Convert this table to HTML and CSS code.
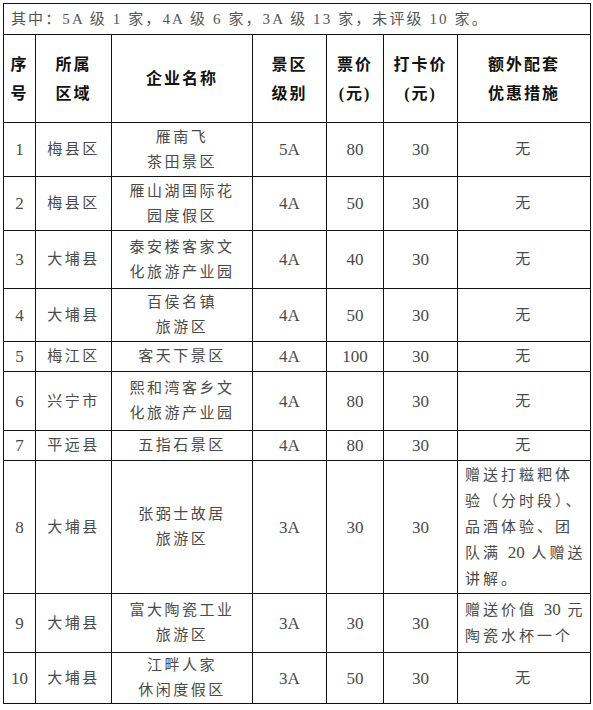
FILE: index.html
```html
<!DOCTYPE html>
<html lang="zh">
<head>
<meta charset="utf-8">
<link rel="stylesheet" href="styles.css">
</head>
<body>
<div class="page">
<table class="tbl">
<colgroup>
<col class="c1"><col class="c2"><col class="c3"><col class="c4"><col class="c5"><col class="c6"><col class="c7">
</colgroup>
<tr class="r-cap"><td colspan="7" class="cap">其中：5A 级 1 家，4A 级 6 家，3A 级 13 家，未评级 10 家。</td></tr>
<tr class="r-head">
<th>序<br>号</th>
<th>所属<br>区域</th>
<th>企业名称</th>
<th>景区<br>级别</th>
<th>票价<br>(元)</th>
<th>打卡价<br>(元)</th>
<th>额外配套<br>优惠措施</th>
</tr>
<tr class="h54"><td class="num">1</td><td>梅县区</td><td>雁南飞<br>茶田景区</td><td class="num">5A</td><td class="num">80</td><td class="num">30</td><td>无</td></tr>
<tr class="h54"><td class="num">2</td><td>梅县区</td><td>雁山湖国际花<br>园度假区</td><td class="num">4A</td><td class="num">50</td><td class="num">30</td><td>无</td></tr>
<tr class="h58"><td class="num">3</td><td>大埔县</td><td>泰安楼客家文<br>化旅游产业园</td><td class="num">4A</td><td class="num">40</td><td class="num">30</td><td>无</td></tr>
<tr class="h53"><td class="num">4</td><td>大埔县</td><td>百侯名镇<br>旅游区</td><td class="num">4A</td><td class="num">50</td><td class="num">30</td><td>无</td></tr>
<tr class="h30"><td class="num">5</td><td>梅江区</td><td>客天下景区</td><td class="num">4A</td><td class="num">100</td><td class="num">30</td><td>无</td></tr>
<tr class="h59"><td class="num">6</td><td>兴宁市</td><td>熙和湾客乡文<br>化旅游产业园</td><td class="num">4A</td><td class="num">80</td><td class="num">30</td><td>无</td></tr>
<tr class="h30"><td class="num">7</td><td>平远县</td><td>五指石景区</td><td class="num">4A</td><td class="num">80</td><td class="num">30</td><td>无</td></tr>
<tr class="h133"><td class="num">8</td><td>大埔县</td><td>张弼士故居<br>旅游区</td><td class="num">3A</td><td class="num">30</td><td class="num">30</td><td class="left">赠送打糍粑体<br>验（分时段）、<br>品酒体验、团<br>队满 <span class="lat">20</span> 人赠送<br>讲解。</td></tr>
<tr class="h59"><td class="num">9</td><td>大埔县</td><td>富大陶瓷工业<br>旅游区</td><td class="num">3A</td><td class="num">30</td><td class="num">30</td><td class="left">赠送价值 <span class="lat">30</span> 元<br>陶瓷水杯一个</td></tr>
<tr class="h51"><td class="num">10</td><td>大埔县</td><td>江畔人家<br>休闲度假区</td><td class="num">3A</td><td class="num">50</td><td class="num">30</td><td>无</td></tr>
</table>
</div>
</body>
</html>
```

FILE: styles.css
```css
html, body {
  margin: 0;
  padding: 0;
  background: #ffffff;
}
.page {
  padding: 3px 0 0 3px;
}
.tbl {
  border-collapse: collapse;
  table-layout: fixed;
  width: 587px;
  font-family: "Liberation Serif", "Noto Sans CJK SC", serif;
  color: #4a4a4a;
  font-size: 15px;
}
.c1 { width: 32px; }
.c2 { width: 76px; }
.c3 { width: 141px; }
.c4 { width: 74px; }
.c5 { width: 57px; }
.c6 { width: 74px; }
.c7 { width: 133px; }
.tbl td, .tbl th {
  border: 1.5px solid #111;
  padding: 0;
  text-align: center;
  vertical-align: middle;
  line-height: 25px;
  letter-spacing: 2.5px;
  box-sizing: border-box;
}
.tbl th {
  font-weight: bold;
  color: #111;
  font-size: 16px;
  line-height: 29px;
  letter-spacing: 2px;
}
.r-cap { height: 31px; }
.r-head { height: 88px; }
.h54 { height: 54px; }
.h58 { height: 58px; }
.h53 { height: 53px; }
.h30 { height: 30px; }
.h59 { height: 59px; }
.h133 { height: 133px; }
.h51 { height: 51px; }
.tbl td.cap {
  text-align: left;
  padding-left: 7px;
  letter-spacing: 2.1px;
  font-size: 15px;
  color: #555;
}
.tbl td.num {
  font-size: 17px;
  letter-spacing: 0;
}
.tbl td.left {
  text-align: left;
  padding-left: 7px;
  line-height: 26px;
  letter-spacing: 3px;
}
.lat {
  font-size: 17px;
  letter-spacing: 0;
}
```
